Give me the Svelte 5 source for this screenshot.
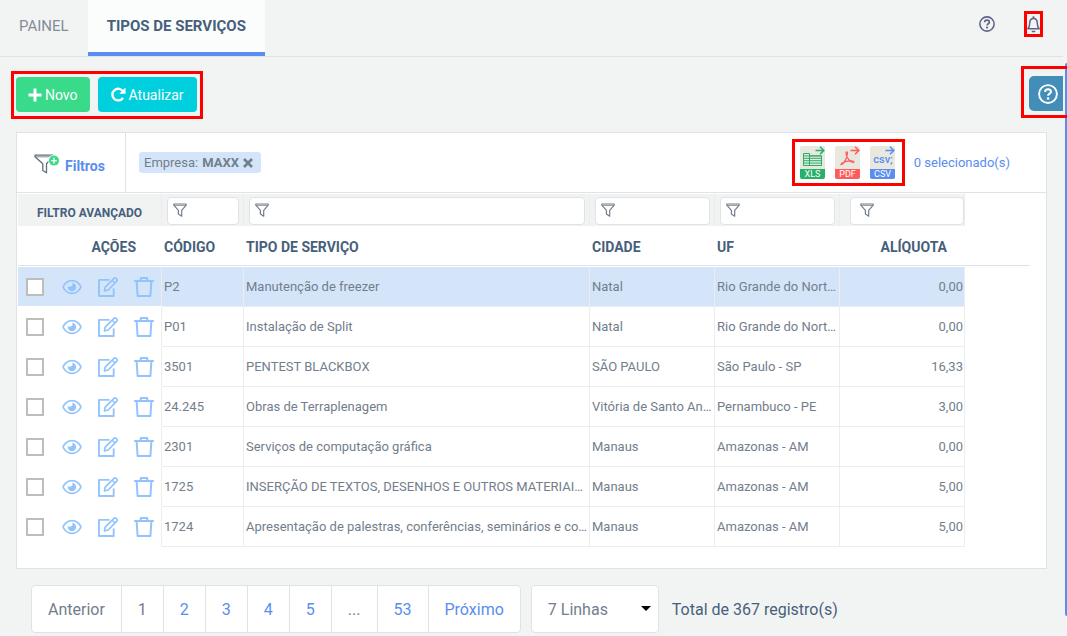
<script lang="ts">
  type Service = {
    code: string;
    name: string;
    city: string;
    state: string;
    rate: string;
  };

  const services: Service[] = [
    { code: 'P2', name: 'Manutenção de freezer', city: 'Natal', state: 'Rio Grande do Norte - RN', rate: '0,00' },
    { code: 'P01', name: 'Instalação de Split', city: 'Natal', state: 'Rio Grande do Norte - RN', rate: '0,00' },
    { code: '3501', name: 'PENTEST BLACKBOX', city: 'SÃO PAULO', state: 'São Paulo - SP', rate: '16,33' },
    { code: '24.245', name: 'Obras de Terraplenagem', city: 'Vitória de Santo Antão', state: 'Pernambuco - PE', rate: '3,00' },
    { code: '2301', name: 'Serviços de computação gráfica', city: 'Manaus', state: 'Amazonas - AM', rate: '0,00' },
    { code: '1725', name: 'INSERÇÃO DE TEXTOS, DESENHOS E OUTROS MATERIAIS DE PROPAGANDA', city: 'Manaus', state: 'Amazonas - AM', rate: '5,00' },
    { code: '1724', name: 'Apresentação de palestras, conferências, seminários e congressos', city: 'Manaus', state: 'Amazonas - AM', rate: '5,00' }
  ];

  const columns = ['Código', 'Tipo de serviço', 'Cidade', 'UF', 'Alíquota'];
  const pages = ['1', '2', '3', '4', '5', '...', '53'];

  let activeRow = $state(0);
  let currentPage = $state('1');
  let pageSize = $state('7');
  let showCompany = $state(true);
</script>

{#snippet funnel()}
  <svg class="funnel" viewBox="0 0 14 14" fill="none" aria-hidden="true">
    <path d="M.8 1h12.4v1.2L8.7 7.4v5.8L5.4 11V7.4L.8 2.2z" stroke="currentColor" stroke-width="1.2" stroke-linejoin="round" />
    <path d="M1.5 2.4h11" stroke="currentColor" stroke-width=".8" />
  </svg>
{/snippet}

{#snippet question()}
  <svg viewBox="0 0 24 24" fill="none" aria-hidden="true">
    <circle cx="12" cy="12" r="10.7" stroke="currentColor" stroke-width="2.3" />
    <path d="M8.4 9.4c.2-2 1.6-3.2 3.6-3.2s3.5 1.2 3.5 3c0 2.400-3.400 2.500-3.400 5" stroke="currentColor" stroke-width="2.500" />
    <circle cx="12.1" cy="17.4" r="1.6" fill="currentColor" />
  </svg>
{/snippet}

<div class="page">
  <header class="topbar">
    <nav class="tabs">
      <a href="#painel" class="tab">PAINEL</a>
      <a href="#servicos" class="tab tab--active">TIPOS DE SERVIÇOS</a>
    </nav>
    <div class="topbar-icons">
      <button class="icon-btn" aria-label="Ajuda">{@render question()}</button>
      <div class="mark mark--bell">
        <button class="icon-btn icon-btn--bell" aria-label="Notificações">
          <svg viewBox="0 0 13 18" fill="none" aria-hidden="true">
            <path d="M.8 13.700c1.500-1.400 1.900-3 1.900-5.500 0-3 1.500-4.800 3.800-4.800s3.800 1.800 3.800 4.800c0 2.500.4 4.100 1.900 5.500z" stroke="currentColor" stroke-width="1.500" stroke-linejoin="round" />
            <path d="M6.500 3.500V1.300" stroke="currentColor" stroke-width="1.800" />
            <path d="M4.500 15.800h4c0 1-.8 1.600-2 1.600s-2-.6-2-1.600z" fill="currentColor" />
          </svg>
        </button>
      </div>
    </div>
  </header>

  <main class="content">
    <div class="mark mark--actions">
      <button class="btn btn--new">
        <svg viewBox="0 0 14 14" aria-hidden="true">
          <path d="M5.500.5h3v5h5v3h-5v5h-3v-5h-5v-3h5z" fill="currentColor" />
        </svg>
        Novo
      </button>
      <button class="btn btn--refresh">
        <svg viewBox="0 0 15 15" fill="none" aria-hidden="true">
          <path d="M12.200 4.700A5.800 5.800 0 1 0 12 10.800" stroke="currentColor" stroke-width="2.400" />
          <path d="M14.500.6v6.200H8.300z" fill="currentColor" />
        </svg>
        Atualizar
      </button>
    </div>

    <section class="card">
      <div class="card-head">
        <button class="filters">
          <svg viewBox="0 0 26 20" fill="none" aria-hidden="true">
            <path d="M1 1.200h18v1.500l-6.500 7v9.100L8.800 16.500V9.700L1 2.700z" stroke="#5f6f80" stroke-width="1.300" stroke-linejoin="round" />
            <path d="M1.800 2.800h16" stroke="#5f6f80" stroke-width=".8" />
            <circle cx="20" cy="6.600" r="5.800" fill="#fff" />
            <circle cx="20" cy="6.600" r="5" fill="#39da8a" />
            <path d="M20 3.800v5.600M17.200 6.600h5.600" stroke="#fff" stroke-width="1.400" />
          </svg>
          Filtros
        </button>

        <div class="chips">
          {#if showCompany}
            <span class="chip">
              Empresa: <b>MAXX</b>
              <button class="chip-close" aria-label="Remover filtro" onclick={() => (showCompany = false)}>
                <svg viewBox="0 0 10 10" aria-hidden="true">
                  <path d="M1 1l8 8M9 1L1 9" stroke="currentColor" stroke-width="2.600" />
                </svg>
              </button>
            </span>
          {/if}
        </div>

        <div class="mark mark--export">
          <button class="export" aria-label="Exportar XLS">
            <svg viewBox="0 0 25 33" aria-hidden="true">
              <rect width="25" height="33" rx="2" fill="#e8e8df" />
              <path d="M0 23h25v8a2 2 0 0 1-2 2H2a2 2 0 0 1-2-2z" fill="#28b06b" />
              <path d="M3.500 7.500h6v2.400h12v9.600h-18zM3.500 9.900h18M3.500 12.300h18M3.500 14.700h18M3.500 17.100h18M9.500 7.500v12" fill="none" stroke="#28b06b" />
              <path d="M15.500 4.500h8M20 .8l3.800 3.700L20 8.200" fill="none" stroke="#28b06b" stroke-width="1.500" />
              <text x="12.500" y="31">XLS</text>
            </svg>
          </button>
          <button class="export" aria-label="Exportar PDF">
            <svg viewBox="0 0 25 33" aria-hidden="true">
              <rect width="25" height="33" rx="2" fill="#e8e8df" />
              <path d="M0 23h25v8a2 2 0 0 1-2 2H2a2 2 0 0 1-2-2z" fill="#ff5b5c" />
              <path d="M6.500 18.500c2.400-.6 5.600-6.500 6-11.500.1-1.500-1.600-1.500-1.500.2.300 4 3.500 8.300 6.600 9.300 1.600.5 1.900-1.400.3-1.500-3.600-.2-7.800.3-10.600 1.900-1.400.8-1.800 1.800-.8 1.600z" fill="none" stroke="#ff5b5c" stroke-width="1.200" />
              <path d="M15.500 4.500h8M20 .8l3.800 3.700L20 8.200" fill="none" stroke="#ff5b5c" stroke-width="1.500" />
              <text x="12.500" y="31">PDF</text>
            </svg>
          </button>
          <button class="export" aria-label="Exportar CSV">
            <svg viewBox="0 0 25 33" aria-hidden="true">
              <rect width="25" height="33" rx="2" fill="#e8e8df" />
              <path d="M0 23h25v8a2 2 0 0 1-2 2H2a2 2 0 0 1-2-2z" fill="#5a8dee" />
              <text class="csv" x="13" y="17">csv;</text>
              <path d="M15.500 4.500h8M20 .8l3.800 3.700L20 8.200" fill="none" stroke="#5a8dee" stroke-width="1.500" />
              <text x="12.500" y="31">CSV</text>
            </svg>
          </button>
        </div>
        <span class="selected">0 selecionado(s)</span>
      </div>

      <table>
        <colgroup>
          <col class="col-actions" />
          <col class="col-code" />
          <col />
          <col class="col-mid" />
          <col class="col-mid" />
          <col class="col-mid" />
          <col class="col-end" />
        </colgroup>
        <thead>
          <tr class="filter-row">
            <th>FILTRO AVANÇADO</th>
            {#each columns as column, i}
              <td class:wide={i === columns.length - 1}>
                <label class="filter">
                  {@render funnel()}
                  <input type="text" aria-label="Filtrar {column}" />
                </label>
              </td>
            {/each}
            <td class="blank"></td>
          </tr>
          <tr class="head-row">
            <th class="head-actions">AÇÕES</th>
            <th>CÓDIGO</th>
            <th>TIPO DE SERVIÇO</th>
            <th>CIDADE</th>
            <th>UF</th>
            <th class="head-rate">ALÍQUOTA</th>
            <th></th>
          </tr>
        </thead>
        <tbody>
          {#each services as service, i}
            <tr class:active={i === activeRow} onclick={() => (activeRow = i)}>
              <td class="actions">
                <div class="action-list">
                  <input type="checkbox" aria-label="Selecionar {service.code}" />
                  <button aria-label="Visualizar">
                    <svg viewBox="0 0 20 20" fill="none" aria-hidden="true">
                      <path d="M1 10C2.900 6 6 3.600 10 3.600S17.100 6 19 10c-1.900 4-5 6.400-9 6.400S2.900 14 1 10z" stroke="currentColor" stroke-width="1.700" />
                      <path d="M10 5.800a4.200 4.200 0 1 1-4.100 3.200 2.100 2.100 0 0 0 2.700.4A2.100 2.100 0 0 0 10 5.800z" fill="currentColor" />
                    </svg>
                  </button>
                  <button aria-label="Editar">
                    <svg viewBox="0 0 20 20" fill="none" aria-hidden="true">
                      <path d="M11.500 2.900H1v16.100h14.700v-7.500" stroke="currentColor" stroke-width="1.900" stroke-linejoin="round" />
                      <path d="M6.500 14l.7-3.900 8.800-8.700a1.500 1.500 0 0 1 2.100 0l.7.700a1.500 1.500 0 0 1 0 2.100l-8.600 8.800zM14.300 3.300l2.700 2.700" stroke="currentColor" stroke-width="1.700" stroke-linejoin="round" />
                    </svg>
                  </button>
                  <button aria-label="Excluir">
                    <svg viewBox="0 0 20 20" fill="none" aria-hidden="true">
                      <path d="M.2 4h19.600M6.200 3.800l.9-2.700h5.800l.9 2.700" stroke="currentColor" stroke-width="2" />
                      <path d="M2.600 4l1 15h12.800l1-15" stroke="currentColor" stroke-width="2" stroke-linejoin="round" />
                    </svg>
                  </button>
                </div>
              </td>
              <td>{service.code}</td>
              <td>{service.name}</td>
              <td>{service.city}</td>
              <td>{service.state}</td>
              <td class="rate">{service.rate}</td>
              <td class="blank"></td>
            </tr>
          {/each}
        </tbody>
      </table>
    </section>

    <footer class="footer">
      <nav class="pagination" aria-label="Paginação">
        <button class="muted">Anterior</button>
        {#each pages as page}
          <button class:muted={page === currentPage || page === '...'} onclick={() => (currentPage = page)}>{page}</button>
        {/each}
        <button>Próximo</button>
      </nav>
      <div class="page-size">
        <select bind:value={pageSize} aria-label="Linhas por página">
          <option value="7">7 Linhas</option>
          <option value="10">10 Linhas</option>
          <option value="25">25 Linhas</option>
        </select>
        <svg viewBox="0 0 10 5" aria-hidden="true"><path d="M0 0h10L5 5z" /></svg>
      </div>
      <span class="total">Total de 367 registro(s)</span>
    </footer>
  </main>

  <div class="scroll-thumb"></div>
  <div class="mark mark--help">
    <button class="help-btn" aria-label="Central de ajuda">{@render question()}</button>
  </div>
</div>

<style>
  :global(body) {
    background: #f2f4f4;
  }

  .page {
    position: relative;
    box-sizing: border-box;
    min-height: 100vh;
    padding-right: 4px;
    overflow: hidden;
    font-family: Roboto, sans-serif;
    font-size: 13px;
    color: #727e8c;
  }

  .page :global(*) {
    box-sizing: border-box;
  }

  button,
  input,
  select {
    margin: 0;
    padding: 0;
    border: none;
    background: none;
    font: inherit;
    color: inherit;
  }

  button {
    cursor: pointer;
  }

  svg {
    display: block;
    flex: none;
  }

  /* red frames round the highlighted controls */
  .mark {
    display: flex;
    border: 3px solid #f00;
  }

  /* top bar */
  .topbar {
    display: flex;
    justify-content: space-between;
    align-items: flex-start;
    height: 57px;
    border-bottom: 1px solid #dfe3e7;
  }

  .tabs {
    display: flex;
  }

  .tab {
    height: 56px;
    padding: 0 19px;
    font-size: 15px;
    line-height: 52px;
    color: #828d99;
    text-decoration: none;
  }

  .tab--active {
    background: #fbfdfd;
    border-bottom: 4px solid #5a8dee;
    font-weight: 700;
    color: #475f7b;
  }

  .topbar-icons {
    display: flex;
    align-items: center;
    gap: 29px;
    padding: 11px 20px 0 0;
    color: #5f6287;
  }

  .icon-btn svg {
    width: 16px;
    height: 16px;
  }

  .icon-btn--bell svg {
    width: 13px;
    height: 18px;
  }

  .mark--bell {
    height: 26px;
    align-items: center;
  }

  /* content */
  .content {
    padding: 14px 16px 3px;
  }

  .mark--actions {
    width: max-content;
    gap: 8px;
    margin-left: -5px;
    padding: 3px 3px 4px 2px;
  }

  .btn {
    display: flex;
    align-items: center;
    gap: 3px;
    height: 35px;
    padding: 0 12px;
    border-radius: 4px;
    font-size: 14px;
    color: #fff;
  }

  .btn svg {
    width: 14px;
    height: 14px;
  }

  .btn--new {
    background: #39da8a;
  }

  .btn--refresh {
    padding: 0 13px;
    background: #00cfdd;
  }

  .btn--refresh svg {
    width: 15px;
    height: 15px;
  }

  .card {
    margin-top: 13px;
    padding-bottom: 21px;
    background: #fff;
    border: 1px solid #dfe3e7;
  }

  .card-head {
    display: flex;
    align-items: center;
    height: 60px;
    border-bottom: 1px solid #dfe3e7;
  }

  .filters {
    display: flex;
    align-items: center;
    gap: 5px;
    height: 59px;
    width: 109px;
    padding: 6px 0 0 17px;
    border-right: 1px solid #dfe3e7;
    font-size: 14px;
    font-weight: 700;
    color: #5a8dee;
  }

  .filters svg {
    width: 26px;
    height: 20px;
    margin-bottom: 4px;
  }

  .chips {
    flex: 1;
    padding-left: 13px;
  }

  .chip {
    display: inline-flex;
    align-items: center;
    gap: 4px;
    height: 21px;
    padding: 0 8px 0 5px;
    border-radius: 3px;
    background: #d4e5fa;
  }

  .chip-close svg {
    width: 10px;
    height: 10px;
  }

  .mark--export {
    gap: 10px;
    height: 47px;
    padding: 4px 7px 4px 5px;
  }

  .export svg {
    width: 25px;
    height: 33px;
  }

  .export text {
    font-size: 9px;
    text-anchor: middle;
    fill: #fff;
  }

  .export text.csv {
    font-size: 11px;
    font-weight: 500;
    fill: #5a8dee;
  }

  .selected {
    padding: 0 36px 0 9px;
    color: #5a8dee;
  }

  /* table */
  table {
    width: calc(100% - 17px);
    margin-left: 1px;
    table-layout: fixed;
    border-collapse: separate;
    border-spacing: 0;
  }

  .col-actions { width: 144px; }
  .col-code { width: 82px; }
  .col-mid { width: 125px; }
  .col-end { width: 65px; }

  th,
  td {
    padding: 0 0 0 2px;
    text-align: left;
  }

  th {
    font-weight: 700;
    color: #475f7b;
  }

  .filter-row th,
  .filter-row td {
    height: 33px;
    border-top: 1px solid #fff;
    border-right: 1px solid #ebeded;
    background: #f1f3f3;
  }

  .filter-row th {
    padding: 6px 0 0 19px;
    font-size: 12px;
  }

  .filter-row td {
    padding: 2px 4px 0 5px;
  }

  .filter-row td.wide {
    padding: 2px 0 0 10px;
  }

  .filter-row td.blank {
    background: none;
    border-right: none;
  }

  .filter {
    position: relative;
    display: block;
    color: #727e8c;
  }

  .filter .funnel {
    position: absolute;
    top: 6px;
    left: 6px;
    width: 14px;
    height: 14px;
  }

  .wide .funnel {
    left: 10px;
  }

  .filter input {
    display: block;
    width: 100%;
    height: 28px;
    padding: 0 6px 0 26px;
    border: 1px solid #dfe3e7;
    border-radius: 4px;
    background: #fff;
  }

  .head-row th {
    height: 40px;
    padding-top: 2px;
    border-bottom: 1px solid #dfe3e7;
    font-size: 14px;
  }

  .head-row .head-actions {
    padding-right: 26px;
    text-align: right;
  }

  .head-row .head-rate {
    padding-right: 18px;
    text-align: right;
  }

  tbody td {
    height: 40px;
    border-right: 1px solid #ebedef;
    border-bottom: 1px solid #ebedef;
    overflow: hidden;
    white-space: nowrap;
    text-overflow: ellipsis;
  }

  tbody tr:first-child td {
    height: 41px;
    border-top: 1px solid #fff;
  }

  tbody .active td {
    background: #d4e5fa;
  }

  tbody td.actions {
    padding: 0 7px 0 8px;
    border-bottom-color: #fff;
  }

  tbody td.rate {
    padding-right: 1px;
    text-align: right;
  }

  tbody td.blank {
    background: none;
    border-right: none;
    border-bottom: none;
  }

  .action-list {
    display: flex;
    align-items: center;
    gap: 16px;
    color: #93c3fd;
  }

  .action-list svg {
    width: 20px;
    height: 20px;
  }

  .action-list input {
    appearance: none;
    width: 18px;
    height: 18px;
    margin-right: 2px;
    border: 2px solid #bdbdbd;
    background: #fff;
  }

  .action-list input:checked {
    background: #5a8dee;
  }

  /* footer */
  .footer {
    display: flex;
    align-items: center;
    margin-top: 16px;
    padding-left: 15px;
    font-size: 16px;
  }

  .pagination {
    display: flex;
    height: 48px;
    border: 1px solid #dfe3e7;
    border-radius: 4px;
    background: #fff;
  }

  .pagination button {
    padding: 0 16px;
    color: #5a8dee;
  }

  .pagination button + button {
    border-left: 1px solid #dfe3e7;
  }

  .pagination button.muted {
    color: #727e8c;
  }

  .page-size {
    position: relative;
    margin: 0 13px 0 10px;
  }

  .page-size select {
    display: block;
    appearance: none;
    width: 128px;
    height: 48px;
    padding: 0 16px;
    border: 1px solid #dfe3e7;
    border-radius: 4px;
    background: #fff;
  }

  .page-size svg {
    position: absolute;
    top: 21px;
    right: 8px;
    width: 10px;
    height: 5px;
    pointer-events: none;
  }

  .total {
    color: #475f7b;
  }

  /* right edge */
  .scroll-thumb {
    position: absolute;
    top: 63px;
    right: 0;
    bottom: 20px;
    width: 2px;
    border-radius: 2px 0 0 2px;
    background: #5a8dee;
  }

  .mark--help {
    position: absolute;
    top: 66px;
    right: 0;
    padding: 7px 4px 4px 5px;
    border-right: none;
  }

  .help-btn {
    display: flex;
    align-items: center;
    justify-content: center;
    width: 34px;
    height: 35px;
    padding-left: 4px;
    border-radius: 5px 0 0 5px;
    background: #438eb9;
    color: #fff;
  }

  .help-btn svg {
    width: 20px;
    height: 20px;
  }
</style>
